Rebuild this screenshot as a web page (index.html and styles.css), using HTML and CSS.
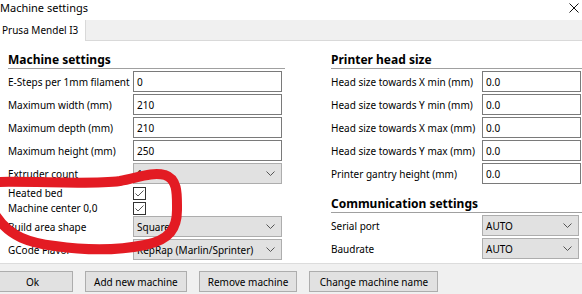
FILE: index.html
```html
<!DOCTYPE html>
<html lang="en">
<head>
  <meta charset="UTF-8" />
  <title>Machine settings</title>
  <link rel="stylesheet" href="styles.css">
</head>
<body>
  <div class="titlebar">
    <span class="title">Machine settings</span>
    <svg class="close" width="10" height="10" viewBox="0 0 10 10">
      <path d="M0.5 0.5 L9.5 9.5 M9.5 0.5 L0.5 9.5" stroke="#111" stroke-width="1" fill="none"/>
    </svg>
  </div>

  <div class="tabs">
    <div class="tab">Prusa Mendel I3</div>
  </div>

  <div class="panel">
    <div class="col col-left">
      <h2 class="section-title">Machine settings</h2>
      <div class="row"><label>E-Steps per 1mm filament</label><input class="field" value="0"></div>
      <div class="row"><label>Maximum width (mm)</label><input class="field" value="210"></div>
      <div class="row"><label>Maximum depth (mm)</label><input class="field" value="210"></div>
      <div class="row"><label>Maximum height (mm)</label><input class="field" value="250"></div>
      <div class="row">
        <label>Extruder count</label>
        <div class="select"><span>1</span><svg class="chev" width="9" height="5" viewBox="0 0 9 5"><path d="M0.5 0.5 L4.5 4.5 L8.5 0.5" stroke="#555" fill="none"/></svg></div>
      </div>
      <div class="row check-row"><label>Heated bed</label><span class="check"><svg width="11" height="11" viewBox="0 0 11 11"><path d="M1.5 5.5 L4 8 L9.5 2.5" stroke="#555" fill="none"/></svg></span></div>
      <div class="row check-row"><label>Machine center 0,0</label><span class="check"><svg width="11" height="11" viewBox="0 0 11 11"><path d="M1.5 5.5 L4 8 L9.5 2.5" stroke="#555" fill="none"/></svg></span></div>
      <div class="row">
        <label>Build area shape</label>
        <div class="select"><span>Square</span><svg class="chev" width="9" height="5" viewBox="0 0 9 5"><path d="M0.5 0.5 L4.5 4.5 L8.5 0.5" stroke="#555" fill="none"/></svg></div>
      </div>
      <div class="row">
        <label>GCode Flavor</label>
        <div class="select"><span>RepRap (Marlin/Sprinter)</span><svg class="chev" width="9" height="5" viewBox="0 0 9 5"><path d="M0.5 0.5 L4.5 4.5 L8.5 0.5" stroke="#555" fill="none"/></svg></div>
      </div>
    </div>

    <div class="col col-right">
      <h2 class="section-title">Printer head size</h2>
      <div class="row"><label>Head size towards X min (mm)</label><input class="field" value="0.0"></div>
      <div class="row"><label>Head size towards Y min (mm)</label><input class="field" value="0.0"></div>
      <div class="row"><label>Head size towards X max (mm)</label><input class="field" value="0.0"></div>
      <div class="row"><label>Head size towards Y max (mm)</label><input class="field" value="0.0"></div>
      <div class="row"><label>Printer gantry height (mm)</label><input class="field" value="0.0"></div>

      <h2 class="section-title section-next">Communication settings</h2>
      <div class="row">
        <label>Serial port</label>
        <div class="select"><span>AUTO</span><svg class="chev" width="9" height="5" viewBox="0 0 9 5"><path d="M0.5 0.5 L4.5 4.5 L8.5 0.5" stroke="#555" fill="none"/></svg></div>
      </div>
      <div class="row">
        <label>Baudrate</label>
        <div class="select"><span>AUTO</span><svg class="chev" width="9" height="5" viewBox="0 0 9 5"><path d="M0.5 0.5 L4.5 4.5 L8.5 0.5" stroke="#555" fill="none"/></svg></div>
      </div>
    </div>
  </div>

  <div class="footer">
    <button class="btn btn-ok">Ok</button>
    <button class="btn">Add new machine</button>
    <button class="btn">Remove machine</button>
    <button class="btn btn-rename">Change machine name</button>
  </div>

  <!-- red marker scribble drawn over the screenshot -->
  <svg class="scribble" width="582" height="294" viewBox="0 0 582 294">
    <path d="M-6 182 C40 181, 90 185, 120 181 C140 177, 152 172, 165 175 C178 179, 177 195, 177 210 C177 228, 170 240, 145 245 C120 250, 90 251, 55 246 C30 243, 10 237, -4 216"
          stroke="#e31b23" stroke-width="10" stroke-linecap="round" stroke-linejoin="round" fill="none"/>
  </svg>
</body>
</html>
```

FILE: styles.css
```css
* {
  margin: 0;
  padding: 0;
  box-sizing: border-box;
}

body {
  font-family: "Noto Sans", "Liberation Sans", sans-serif;
  font-size: 10px;
  color: #000;
  background-color: #ffffff;
  width: 582px;
  height: 294px;
  overflow: hidden;
  position: relative;
}

.titlebar {
  height: 20px;
  display: flex;
  justify-content: space-between;
  align-items: flex-start;
  font-size: 11px;
  line-height: 16px;
  padding-right: 3px;
}

.title {
  margin-left: 0;
}

.close {
  margin-top: 3px;
}

.tabs {
  height: 21px;
  display: flex;
  background-color: #f0f0f0;
  border-bottom: 1px solid #d9d9d9;
}

.tab {
  width: 86px;
  height: 21px;
  margin-bottom: -1px;
  padding-left: 2px;
  line-height: 21px;
  background-color: #ffffff;
  border-right: 1px solid #d9d9d9;
}

.panel {
  height: 222px;
  display: flex;
  padding-top: 12px;
}

.col-left {
  margin-left: 8px;
  width: 277px;
}

.col-right {
  margin-left: 46px;
  width: 251px;
}

.section-title {
  font-size: 12px;
  font-weight: bold;
  line-height: 14px;
  padding-bottom: 1px;
  border-bottom: 1px solid #a0a0a0;
  margin-bottom: 1px;
}

.section-next {
  margin-top: 13px;
}

.row {
  display: flex;
  align-items: center;
  height: 21px;
  margin-top: 2px;
}

.row label {
  flex-shrink: 0;
  white-space: nowrap;
}

.col-left .row label {
  width: 125px;
}

.col-right .row label {
  width: 151px;
}

.check-row {
  height: 14px;
  margin-bottom: -1px;
}

.field {
  height: 21px;
  border: 1px solid #7a7a7a;
  padding: 0 3px;
  font: inherit;
  color: #000;
  background-color: #ffffff;
  outline: none;
}

.col-left .field,
.col-left .select {
  width: 149px;
}

.col-right .field {
  width: 99px;
}

.col-right .select {
  width: 97px;
}

.select {
  height: 21px;
  display: flex;
  justify-content: space-between;
  align-items: center;
  padding: 0 6px 0 3px;
  background-color: #e1e1e1;
  border: 1px solid #adadad;
}

.check {
  width: 13px;
  height: 13px;
  border: 1px solid #333;
  background-color: #ffffff;
  display: flex;
}

.footer {
  height: 31px;
  display: flex;
  gap: 12px;
  padding-top: 7px;
  background-color: #f0f0f0;
  border-top: 1px solid #dcdcdc;
}

.btn {
  height: 21px;
  padding: 0 8px;
  font: inherit;
  color: #000;
  background-color: #e1e1e1;
  border: 1px solid #adadad;
}

.btn-ok {
  min-width: 81px;
  margin-left: -8px;
}

.btn-rename {
  min-width: 129px;
}

.scribble {
  position: absolute;
  top: 0;
  left: 0;
  pointer-events: none;
  overflow: visible;
}
```
